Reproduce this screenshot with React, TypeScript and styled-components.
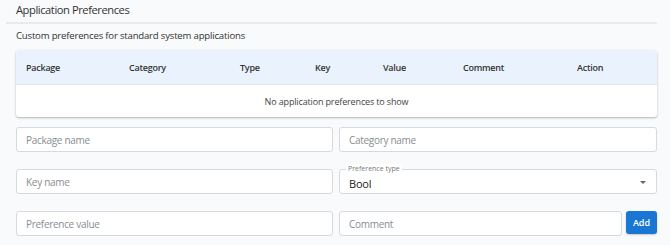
import React from "react";
import styled, { createGlobalStyle } from "styled-components";

const Global = createGlobalStyle`
  html, body { margin: 0; padding: 0; background: #f9fafb; }
  body { font-family: "Open Sans", "Noto Sans", sans-serif; color: #212529; }
  * { box-sizing: border-box; }
`;

const Page = styled.div`
  width: 670px;
  height: 245px;
  overflow: hidden;
  padding: 0 13px 0 6px;
`;

const TitleBar = styled.div`
  padding: 2px 0 0 10px;
  height: 24px;
  border-bottom: 2px solid #e8eaed;
`;

const Title = styled.h1`
  margin: 0;
  font-size: 11.2px;
  letter-spacing: -0.45px;
  font-weight: 400;
  line-height: 16px;
  color: #333;
`;

const Content = styled.div`
  padding: 0 0 0 10px;
`;

const Subtitle = styled.p`
  margin: 0;
  padding-top: 5px;
  height: 26px;
  font-size: 9.6px;
  letter-spacing: -0.2px;
  line-height: 14px;
  color: #333;
`;

const Table = styled.div`
  background: #fff;
  border-radius: 3px;
  box-shadow: 0 1px 2px rgba(0, 0, 0, 0.22), 0 1px 3px rgba(0, 0, 0, 0.08);
  overflow: hidden;
`;

const HeaderRow = styled.div`
  display: grid;
  grid-template-columns: 103px 111px 75px 68px 80px 114px 1fr;
  height: 35px;
  align-items: center;
  background: #eaf3fd;
  border-bottom: 1px solid #e3e8ef;
`;

const HeaderCell = styled.div`
  padding-left: 10px;
  font-size: 9px;
  letter-spacing: -0.25px;
  font-weight: 600;
  color: #333;
`;

const EmptyRow = styled.div`
  height: 32px;
  display: flex;
  align-items: center;
  justify-content: center;
  font-size: 9px;
  letter-spacing: -0.15px;
  color: #444;
`;

const Form = styled.div`
  display: grid;
  grid-template-columns: 317px 1fr;
  column-gap: 6px;
  row-gap: 17px;
  margin-top: 10px;
`;

const Field = styled.div`
  position: relative;
  display: flex;
  align-items: center;
  height: 25px;
  background: #fff;
  border: 1px solid #d6d9dd;
  border-radius: 3px;
  padding: 0 9px;
  font-size: 10px;
  letter-spacing: -0.3px;
`;

const Placeholder = styled.span`
  color: #8a8d91;
`;

const Value = styled.span`
  color: #222;
  font-size: 11px;
  letter-spacing: -0.2px;
  margin-top: 3px;
`;

const Legend = styled.span`
  position: absolute;
  left: 6px;
  top: -6px;
  padding: 0 2px;
  font-size: 7px;
  letter-spacing: 0;
  line-height: 10px;
  color: #777;
  background: #fff;
`;

const Arrow = styled.span`
  position: absolute;
  right: 10px;
  top: 11px;
  width: 0;
  height: 0;
  border-left: 3px solid transparent;
  border-right: 3px solid transparent;
  border-top: 3px solid #666;
`;

const InlineRow = styled.div`
  display: flex;
  gap: 4px;
  align-items: flex-start;
`;

const GrowField = styled(Field)`
  flex: 1;
`;

const AddButton = styled.button`
  width: 31px;
  height: 23px;
  border: none;
  border-radius: 3px;
  background: #1976d2;
  color: #fff;
  font-family: inherit;
  font-size: 9px;
  font-weight: 600;
  padding: 0;
  box-shadow: 0 1px 2px rgba(0, 0, 0, 0.2);
`;

const columns = ["Package", "Category", "Type", "Key", "Value", "Comment", "Action"];

export default function App() {
  return (
    <>
      <Global />
      <Page>
        <TitleBar>
          <Title>Application Preferences</Title>
        </TitleBar>
        <Content>
          <Subtitle>Custom preferences for standard system applications</Subtitle>
          <Table>
            <HeaderRow>
              {columns.map((c) => (
                <HeaderCell key={c}>{c}</HeaderCell>
              ))}
            </HeaderRow>
            <EmptyRow>No application preferences to show</EmptyRow>
          </Table>
          <Form>
            <Field>
              <Placeholder>Package name</Placeholder>
            </Field>
            <Field>
              <Placeholder>Category name</Placeholder>
            </Field>
            <Field>
              <Placeholder>Key name</Placeholder>
            </Field>
            <Field>
              <Legend>Preference type</Legend>
              <Value>Bool</Value>
              <Arrow />
            </Field>
            <Field>
              <Placeholder>Preference value</Placeholder>
            </Field>
            <InlineRow>
              <GrowField>
                <Placeholder>Comment</Placeholder>
              </GrowField>
              <AddButton>Add</AddButton>
            </InlineRow>
          </Form>
        </Content>
      </Page>
    </>
  );
}
